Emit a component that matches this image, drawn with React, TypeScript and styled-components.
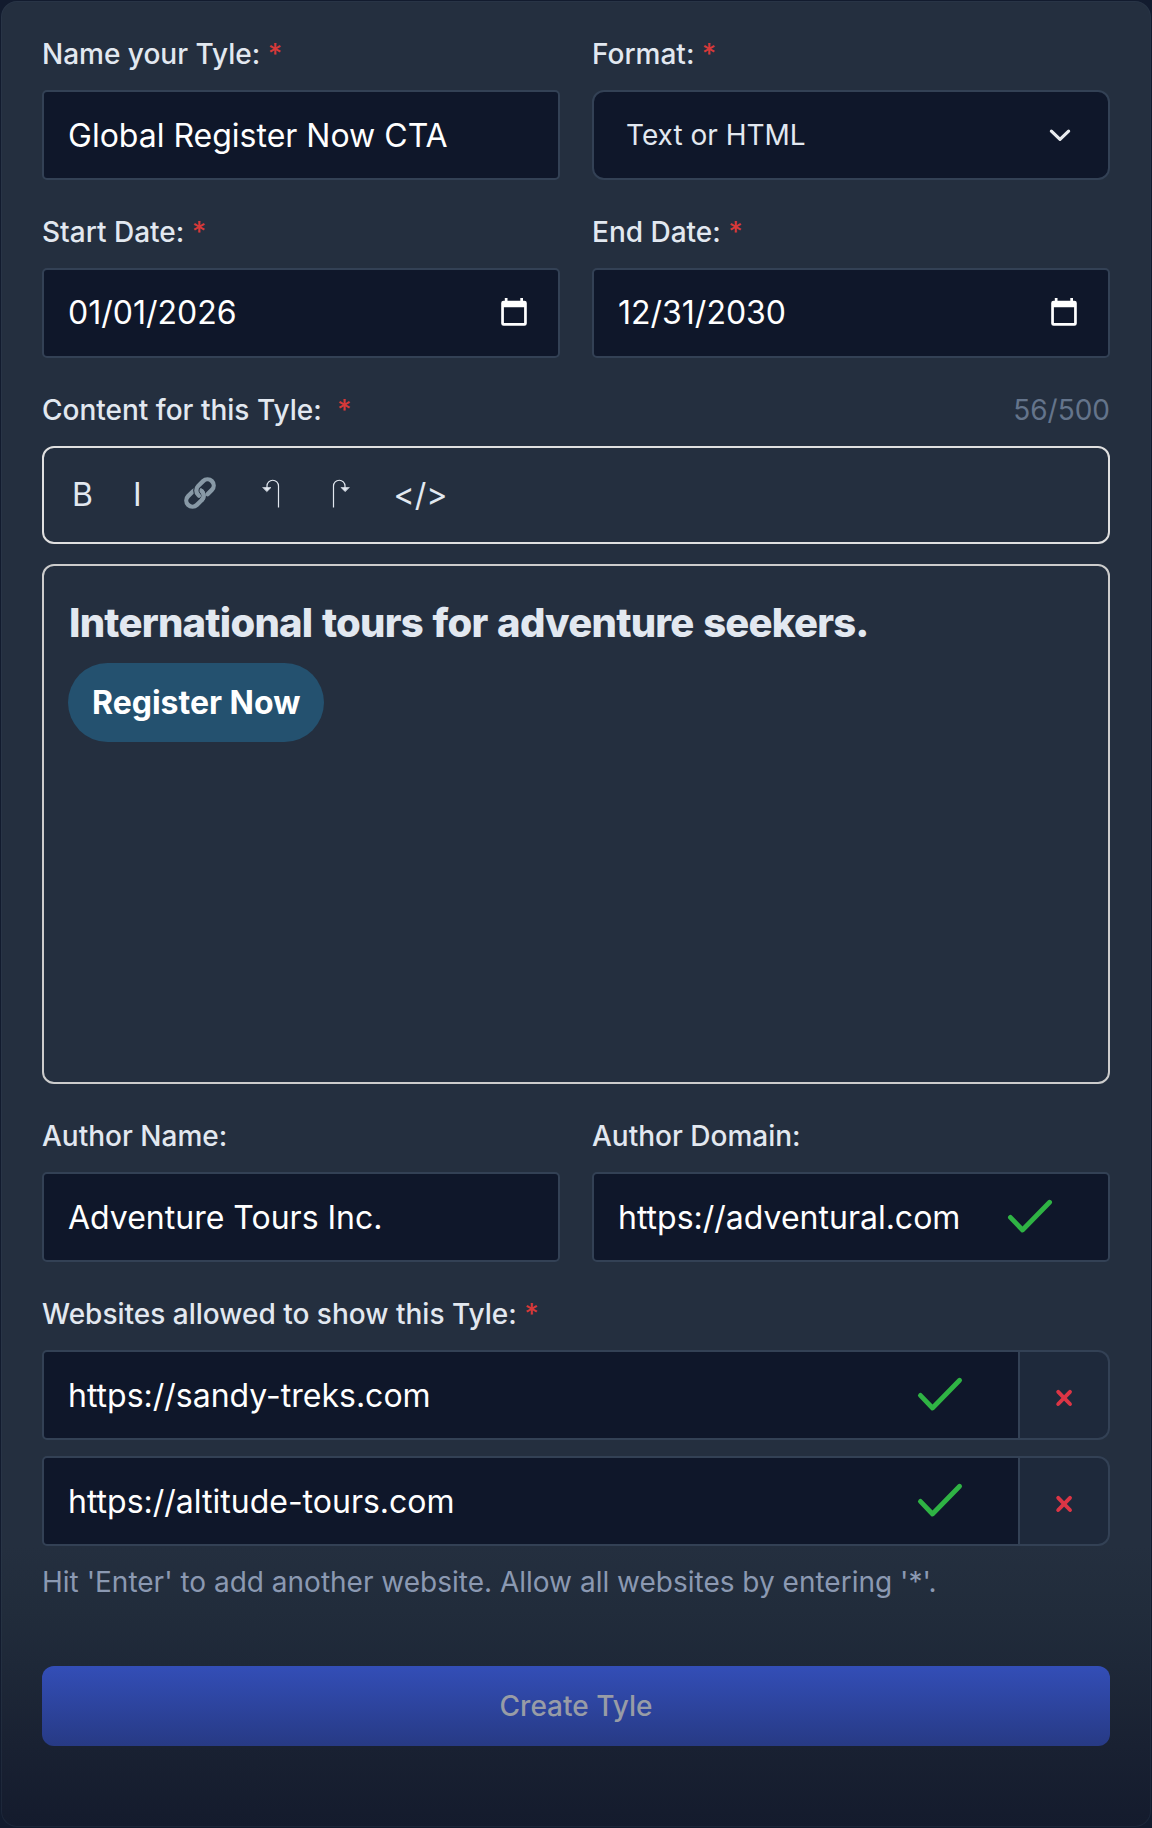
import React from "react";
import styled, { createGlobalStyle } from "styled-components";

const GlobalStyle = createGlobalStyle`
  *, *::before, *::after { box-sizing: border-box; }
  body {
    margin: 0;
    background: #0f172a;
    font-family: Inter, "Liberation Sans", sans-serif;
    color: #e2e8f0;
  }
  input, button { font-family: inherit; }
`;

const Page = styled.main`
  padding: 1px;
  height: 1828px;
  background: #121b2e;
`;

const Card = styled.form`
  height: 1826px;
  padding: 32px 40px 0;
  border: 1px solid rgba(51, 65, 85, 0.3);
  border-radius: 16px;
  background: linear-gradient(
    180deg,
    #242f3f 0,
    #242f3f 1545px,
    #212c3b 1610px,
    #1e2838 1665px,
    #192132 1745px,
    #141b2d 1826px
  );
  background-origin: border-box;
  display: flex;
  flex-direction: column;
  gap: 32px;
`;

const Columns = styled.div`
  display: grid;
  grid-template-columns: 1fr 1fr;
  gap: 32px;
`;

const Field = styled.div`
  display: flex;
  flex-direction: column;
  gap: 16px;
  min-width: 0;
`;

const LabelRow = styled.div`
  display: flex;
  justify-content: space-between;
  font-size: 28px;
  line-height: 40px;
`;

const Label = styled.label`
  font-weight: 500;
  white-space: pre;
`;

const Star = styled.span<{ $wide?: boolean }>`
  color: #d63939;
  margin-left: ${(p) => (p.$wide ? 8 : 0)}px;
`;

const Counter = styled.span`
  color: #64748b;
`;

const Box = styled.div<{ $radius?: string; $padRight?: number }>`
  width: 100%;
  min-width: 0;
  height: 90px;
  display: flex;
  align-items: center;
  padding: 0 ${(p) => p.$padRight ?? 24}px 0 0;
  border: 2px solid #334155;
  border-radius: ${(p) => p.$radius ?? "5px"};
  background: #0f172a;
`;

const Input = styled.input`
  flex: 1;
  min-width: 0;
  height: 100%;
  padding: 0 0 0 24px;
  border: 0;
  outline: 0;
  background: transparent;
  color: #ffffff;
  font-size: 32px;
`;

const DateInput = styled(Input)`
  padding-bottom: 2px;
`;

const SelectText = styled.span`
  flex: 1;
  padding-left: 32px;
  font-size: 28px;
`;

const Frame = styled.div<{ $color: string }>`
  border: 2px solid ${(p) => p.$color};
  border-radius: 12px;
`;

const Toolbar = styled(Frame)`
  height: 98px;
  padding: 0 28px 4px;
  display: flex;
  align-items: center;
  gap: 40px;
`;

const Tool = styled.button<{ $drop?: number }>`
  padding: ${(p) => p.$drop ?? 0}px 0 0;
  border: 0;
  background: none;
  color: #e2e8f0;
  font-size: 32px;
  line-height: 40px;
  display: flex;
  align-items: center;
`;

const EditorStack = styled.div`
  display: flex;
  flex-direction: column;
  gap: 20px;
`;

const Editor = styled(Frame)`
  height: 520px;
  padding: 24px;
`;

const Heading = styled.h2`
  margin: 0 0 8px;
  padding: 1px 0 0 1px;
  font-size: 40px;
  line-height: 64px;
  font-weight: 800;
  letter-spacing: -0.76px;
  word-spacing: 1.6px;
`;

const Pill = styled.a`
  display: inline-flex;
  align-items: center;
  height: 79px;
  padding: 0 24px;
  border-radius: 40px;
  background: #24516f;
  color: #ffffff;
  font-size: 32px;
  font-weight: 700;
`;

const Group = styled.div`
  display: flex;
`;

const RemoveButton = styled.button`
  flex: none;
  width: 90px;
  height: 90px;
  padding: 5px 0 0;
  border: 2px solid #334155;
  border-left: 0;
  border-radius: 0 12px 12px 0;
  background: #1e293b;
  display: flex;
  align-items: center;
  justify-content: center;
`;

const Hint = styled.p`
  margin: 0;
  font-size: 28px;
  line-height: 40px;
  color: #8b99b2;
`;

const Submit = styled.button`
  flex: none;
  height: 80px;
  margin-top: 32px;
  border: 0;
  border-radius: 12px;
  background: linear-gradient(180deg, #334eb7, #273a85);
  color: #989ca6;
  font-size: 28px;
  font-weight: 500;
`;

const Icon = styled.svg`
  display: block;
  flex: none;
  fill: none;
  stroke-linecap: round;
  stroke-linejoin: round;
`;

const Check = () => (
  <Icon width="48" height="48" viewBox="0 0 48 48" stroke="#2fb344" strokeWidth="4.8">
    <path d="M4.4 24.4 L16.5 37 L43.6 9.2" />
  </Icon>
);

const Cross = () => (
  <Icon width="18" height="18" viewBox="0 0 18 18" stroke="#dc3545" strokeWidth="3.9">
    <path d="M3.2 2.8 L15 15 M15 2.8 L3.2 15" />
  </Icon>
);

const Chevron = () => (
  <Icon width="24" height="24" viewBox="0 0 24 24" stroke="#e8ebee" strokeWidth="3.2">
    <path d="M3.4 8.2 L12 16.4 L20.6 8.2" />
  </Icon>
);

const Calendar = () => (
  <Icon width="26" height="30" viewBox="0 0 26 30">
    <path
      fill="#fff"
      fillRule="evenodd"
      d="M3.8 0 H6.5 V2.7 H19.3 V0 H22 V2.7 H23.4 Q25.8 2.7 25.8 5.1 V25.4 Q25.8 27.8 23.4 27.8 H2.6 Q.2 27.8 .2 25.4 V5.1 Q.2 2.7 2.6 2.7 H3.8 Z M2.9 9.2 V25.1 H23.1 V9.2 Z"
    />
  </Icon>
);

const LinkIcon = () => (
  <Icon width="36" height="36" viewBox="0 0 36 36" stroke="#8899a6" strokeWidth="4.3">
    <g transform="translate(18 18) rotate(-45)">
      <rect x="-16.8" y="-6.2" width="19.4" height="12.4" rx="6.2" />
      <path d="M-2.6 1.2 V0 A6.2 6.2 0 0 1 3.6 -6.2 H10.6 A6.2 6.2 0 0 1 10.6 6.2 H4.6" stroke="#242f3f" strokeWidth="6.4" strokeLinecap="butt" />
      <path d="M-2.6 1.2 V0 A6.2 6.2 0 0 1 3.6 -6.2 H10.6 A6.2 6.2 0 0 1 10.6 6.2 H4.6" />
      <path d="M-3.6 6.2 A6.2 6.2 0 0 0 2.6 0" />
    </g>
  </Icon>
);

const Hook = ({ flip }: { flip?: boolean }) => (
  <Icon width="28" height="34" viewBox="0 0 28 34" stroke="#e2e8f0" strokeWidth="1.2">
    <g transform={flip ? "translate(28 0) scale(-1 1)" : undefined}>
      <path d="M20.5 31.5 V10 A5.75 5.75 0 0 0 9 10 V12" strokeLinecap="butt" />
      <path d="M5 11.5 H13 L9 15.5 Z" fill="#e2e8f0" strokeWidth=".6" />
    </g>
  </Icon>
);

const Title = ({ text, required, wide }: { text: string; required?: boolean; wide?: boolean }) => (
  <Label>
    {text}
    {required && <Star $wide={wide}> *</Star>}
  </Label>
);

const SiteRow = ({ url }: { url: string }) => (
  <Group>
    <Box $radius="5px 0 0 5px" $padRight={54}>
      <Input defaultValue={url} />
      <Check />
    </Box>
    <RemoveButton type="button">
      <Cross />
    </RemoveButton>
  </Group>
);

export default function App() {
  return (
    <Page>
      <GlobalStyle />
      <Card>
        <Columns>
          <Field>
            <LabelRow><Title text="Name your Tyle:" required /></LabelRow>
            <Box><Input defaultValue="Global Register Now CTA" /></Box>
          </Field>
          <Field>
            <LabelRow><Title text="Format:" required /></LabelRow>
            <Box $radius="12px" $padRight={36}>
              <SelectText>Text or HTML</SelectText>
              <Chevron />
            </Box>
          </Field>
        </Columns>
        <Columns>
          <Field>
            <LabelRow><Title text="Start Date:" required /></LabelRow>
            <Box $padRight={31}><DateInput defaultValue="01/01/2026" /><Calendar /></Box>
          </Field>
          <Field>
            <LabelRow><Title text="End Date:" required /></LabelRow>
            <Box $padRight={31}><DateInput defaultValue="12/31/2030" /><Calendar /></Box>
          </Field>
        </Columns>
        <Field>
          <LabelRow>
            <Title text="Content for this Tyle:" required wide />
            <Counter>56/500</Counter>
          </LabelRow>
          <EditorStack>
            <Toolbar $color="#e0e0e0">
              <Tool type="button" $drop={3}>B</Tool>
              <Tool type="button" $drop={3}>I</Tool>
              <Tool type="button"><LinkIcon /></Tool>
              <Tool type="button"><Hook /></Tool>
              <Tool type="button"><Hook flip /></Tool>
              <Tool type="button" $drop={4}>&lt;/&gt;</Tool>
            </Toolbar>
            <Editor $color="#cccccc">
              <Heading>International tours for adventure seekers.</Heading>
              <Pill>Register Now</Pill>
            </Editor>
          </EditorStack>
        </Field>
        <Columns>
          <Field>
            <LabelRow><Title text="Author Name:" /></LabelRow>
            <Box><Input defaultValue="Adventure Tours Inc." /></Box>
          </Field>
          <Field>
            <LabelRow><Title text="Author Domain:" /></LabelRow>
            <Box $padRight={54}><Input defaultValue="https://adventural.com" /><Check /></Box>
          </Field>
        </Columns>
        <Field>
          <LabelRow><Title text="Websites allowed to show this Tyle:" required /></LabelRow>
          <SiteRow url="https://sandy-treks.com" />
          <SiteRow url="https://altitude-tours.com" />
          <Hint>Hit 'Enter' to add another website. Allow all websites by entering '*'.</Hint>
        </Field>
        <Submit type="button">Create Tyle</Submit>
      </Card>
    </Page>
  );
}
